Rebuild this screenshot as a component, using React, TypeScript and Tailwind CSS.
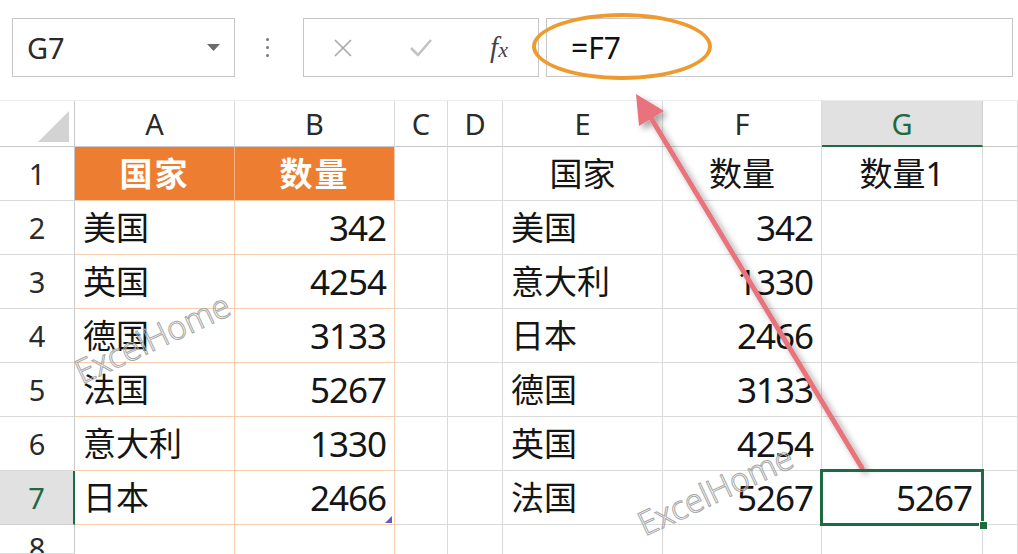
import React from "react";

const left = [
  ["美国", "342"],
  ["英国", "4254"],
  ["德国", "3133"],
  ["法国", "5267"],
  ["意大利", "1330"],
  ["日本", "2466"],
];
const right = [
  ["美国", "342"],
  ["意大利", "1330"],
  ["日本", "2466"],
  ["德国", "3133"],
  ["英国", "4254"],
  ["法国", "5267"],
];
const letters = ["A", "B", "C", "D", "E", "F", "G", ""];

const grid = "border-r border-b border-[#dadada]";
const peach = "border-r border-b border-[#f6cdb0]";

function TextCell({ text, align, extra }: { text: string; align: "l" | "r" | "c"; extra?: string }) {
  const j = align === "l" ? "justify-start pl-[8px]" : align === "r" ? "justify-end pr-[8px]" : "justify-center";
  const num = /^[0-9]+$/.test(text);
  return (
    <div className={`flex items-center overflow-hidden whitespace-nowrap ${j} ${extra ?? grid}`}>
      <span className={`${num ? "text-[35px] tracking-[-1px]" : "text-[33px]"} text-[#151515] leading-none`}>{text}</span>
    </div>
  );
}

export default function App() {
  const cells: React.ReactNode[] = [];
  cells.push(
    <div key="corner" className="relative border-r border-b border-[#c9c9c9] bg-white">
      <svg className="absolute left-[38px] top-[10px]" width="31" height="31" viewBox="0 0 31 31">
        <polygon points="0,31 31,0 31,31" fill="#d3d3d3" />
      </svg>
    </div>
  );
  letters.forEach((l, i) => {
    const sel = l === "G";
    cells.push(
      <div
        key={"h" + i}
        className={`flex items-center justify-center text-[29px] leading-none ${
          sel
            ? "bg-[#e1e1e1] text-[#1e6b43] border-r border-r-[#d0d0d0] border-b-2 border-b-[#1e6b43]"
            : "bg-white text-[#2a2a2a] border-r border-r-[#dadada] border-b border-b-[#c9c9c9]"
        }`}
      >
        {l}
      </div>
    );
  });
  for (let r = 1; r <= 8; r++) {
    const selRow = r === 7;
    cells.push(
      <div
        key={"rn" + r}
        className={`flex justify-center text-[29px] leading-none overflow-hidden ${
          selRow
            ? "bg-[#e1e1e1] text-[#1e6b43] border-r-2 border-r-[#1e6b43] border-b border-b-[#d0d0d0]"
            : "bg-white text-[#2a2a2a] border-r border-r-[#c9c9c9] border-b border-b-[#dadada]"
        } ${r === 8 ? "items-start pt-[8px]" : "items-center"}`}
      >
        {r}
      </div>
    );
    if (r === 1) {
      cells.push(
        <div key="a1" className="flex items-center justify-center bg-[#ed7d31] border-r border-r-[#f5b283] border-b border-b-[#f6cdb0]">
          <span className="text-[33px] font-bold text-white leading-none tracking-[2px]">国家</span>
        </div>
      );
      cells.push(
        <div key="b1" className="flex items-center justify-center bg-[#ed7d31] border-r border-r-[#f6cdb0] border-b border-b-[#f6cdb0]">
          <span className="text-[33px] font-bold text-white leading-none tracking-[2px]">数量</span>
        </div>
      );
      cells.push(<div key="c1" className={grid} />);
      cells.push(<div key="d1" className={grid} />);
      cells.push(<TextCell key="e1" text="国家" align="c" />);
      cells.push(<TextCell key="f1" text="数量" align="c" />);
      cells.push(<TextCell key="g1" text="数量1" align="c" />);
      cells.push(<div key="h1" className={grid} />);
    } else if (r <= 7) {
      const L = left[r - 2];
      const R = right[r - 2];
      cells.push(<TextCell key={"a" + r} text={L[0]} align="l" extra={peach} />);
      cells.push(
        <div key={"b" + r} className={`relative flex items-center justify-end pr-[8px] ${peach}`}>
          <span className="text-[35px] tracking-[-1px] text-[#151515] leading-none">{L[1]}</span>
          {r === 7 && (
            <svg className="absolute right-[2px] bottom-[1px]" width="7" height="7" viewBox="0 0 7 7">
              <polygon points="7,0 7,7 0,7" fill="#5b5cc4" />
            </svg>
          )}
        </div>
      );
      cells.push(<div key={"c" + r} className={grid} />);
      cells.push(<div key={"d" + r} className={grid} />);
      cells.push(<TextCell key={"e" + r} text={R[0]} align="l" />);
      cells.push(<TextCell key={"f" + r} text={R[1]} align="r" />);
      if (r === 7) {
        cells.push(
          <div key="g7" className={`relative z-10 flex items-center justify-end pr-[10px] ${grid}`}>
            <span className="text-[35px] tracking-[-1px] text-[#151515] leading-none">5267</span>
            <div className="absolute left-[-2px] top-[-2px] right-[-2px] bottom-[-2px] border-[3px] border-[#1e6b43] pointer-events-none" />
            <div className="absolute right-[-6px] bottom-[-6px] w-[9px] h-[9px] bg-[#1e6b43] border border-white" />
          </div>
        );
      } else {
        cells.push(<div key={"g" + r} className={grid} />);
      }
      cells.push(<div key={"hh" + r} className={grid} />);
    } else {
      for (let c = 0; c < 8; c++) {
        cells.push(<div key={"r8" + c} className={c < 2 ? "border-r border-[#f6cdb0]" : "border-r border-[#dadada]"} />);
      }
    }
  }

  return (
    <div className="relative w-[1018px] h-[554px] overflow-hidden bg-white font-['Noto_Sans','Noto_Sans_CJK_SC',sans-serif]">
      {/* toolbar */}
      <div className="flex items-start h-[100px] pt-[18px] pl-[12px]">
        <div className="w-[223px] h-[59px] border border-[#c6c6c6] flex items-center justify-between pl-[14px] pr-[14px]">
          <span className="text-[29px] text-[#2a2a2a] leading-none">G7</span>
          <svg width="13" height="7" viewBox="0 0 13 7">
            <polygon points="0,0 13,0 6.5,7" fill="#6b6b6b" />
          </svg>
        </div>
        <div className="w-[68px] h-[59px] flex flex-col items-center justify-center gap-[5px] pr-[4px]">
          <div className="w-[3px] h-[3px] rounded-full bg-[#777]" />
          <div className="w-[3px] h-[3px] rounded-full bg-[#777]" />
          <div className="w-[3px] h-[3px] rounded-full bg-[#777]" />
        </div>
        <div className="w-[236px] h-[59px] border border-[#c6c6c6] flex items-center">
          <div className="w-[78px] flex justify-center">
            <svg width="20" height="20" viewBox="0 0 20 20">
              <path d="M2 2 L18 18 M18 2 L2 18" stroke="#a6a6a6" strokeWidth="1.6" fill="none" />
            </svg>
          </div>
          <div className="w-[78px] flex justify-center">
            <svg width="24" height="20" viewBox="0 0 24 20">
              <path d="M2 10 L9 17 L22 2" stroke="#c2c2c2" strokeWidth="2.6" fill="none" strokeLinejoin="round" />
            </svg>
          </div>
          <div className="w-[78px] flex justify-center items-center">
            <span className="font-['Liberation_Serif',serif] italic text-[#444] leading-none">
              <span className="text-[29px]">f</span>
              <span className="text-[22px]">x</span>
            </span>
          </div>
        </div>
        <div className="ml-[7px] w-[467px] h-[59px] border border-[#c6c6c6] flex items-center pl-[24px]">
          <span className="text-[30px] text-[#111] leading-none">=F7</span>
        </div>
      </div>

      {/* sheet */}
      <div className="grid grid-cols-[75px_160px_160px_53px_55px_160px_159px_161px_1fr] grid-rows-[46px_repeat(7,54px)_1fr] h-[454px] border-t border-[#ececec]">
        {cells}
      </div>

      {/* orange ellipse */}
      <div className="absolute left-[532px] top-[13px] w-[180px] h-[67px] rounded-[50%] border-[4px] border-[#ee9a2f] pointer-events-none" />

      {/* watermarks */}
      <div className="absolute left-[152px] top-[338px] -translate-x-1/2 -translate-y-1/2 -rotate-[25deg] text-[33px] font-light leading-none text-transparent [-webkit-text-stroke:1px_#a8a8a8] whitespace-nowrap pointer-events-none">
        ExcelHome
      </div>
      <div className="absolute left-[715px] top-[490px] -translate-x-1/2 -translate-y-1/2 -rotate-[25deg] text-[33px] font-light leading-none text-transparent [-webkit-text-stroke:1px_#a8a8a8] whitespace-nowrap pointer-events-none">
        ExcelHome
      </div>

      {/* arrow */}
      <svg className="absolute left-0 top-0 pointer-events-none" width="1018" height="554" viewBox="0 0 1018 554">
        <defs>
          <filter id="sh" x="-20%" y="-20%" width="140%" height="140%">
            <feDropShadow dx="4" dy="4" stdDeviation="3" floodColor="#000" floodOpacity="0.35" />
          </filter>
        </defs>
        <g filter="url(#sh)">
          <line x1="862" y1="468" x2="651" y2="118" stroke="#e9737b" strokeWidth="5" strokeLinecap="round" />
          <polygon points="636,94 664,111 639,126" fill="#e9737b" />
        </g>
      </svg>
    </div>
  );
}
